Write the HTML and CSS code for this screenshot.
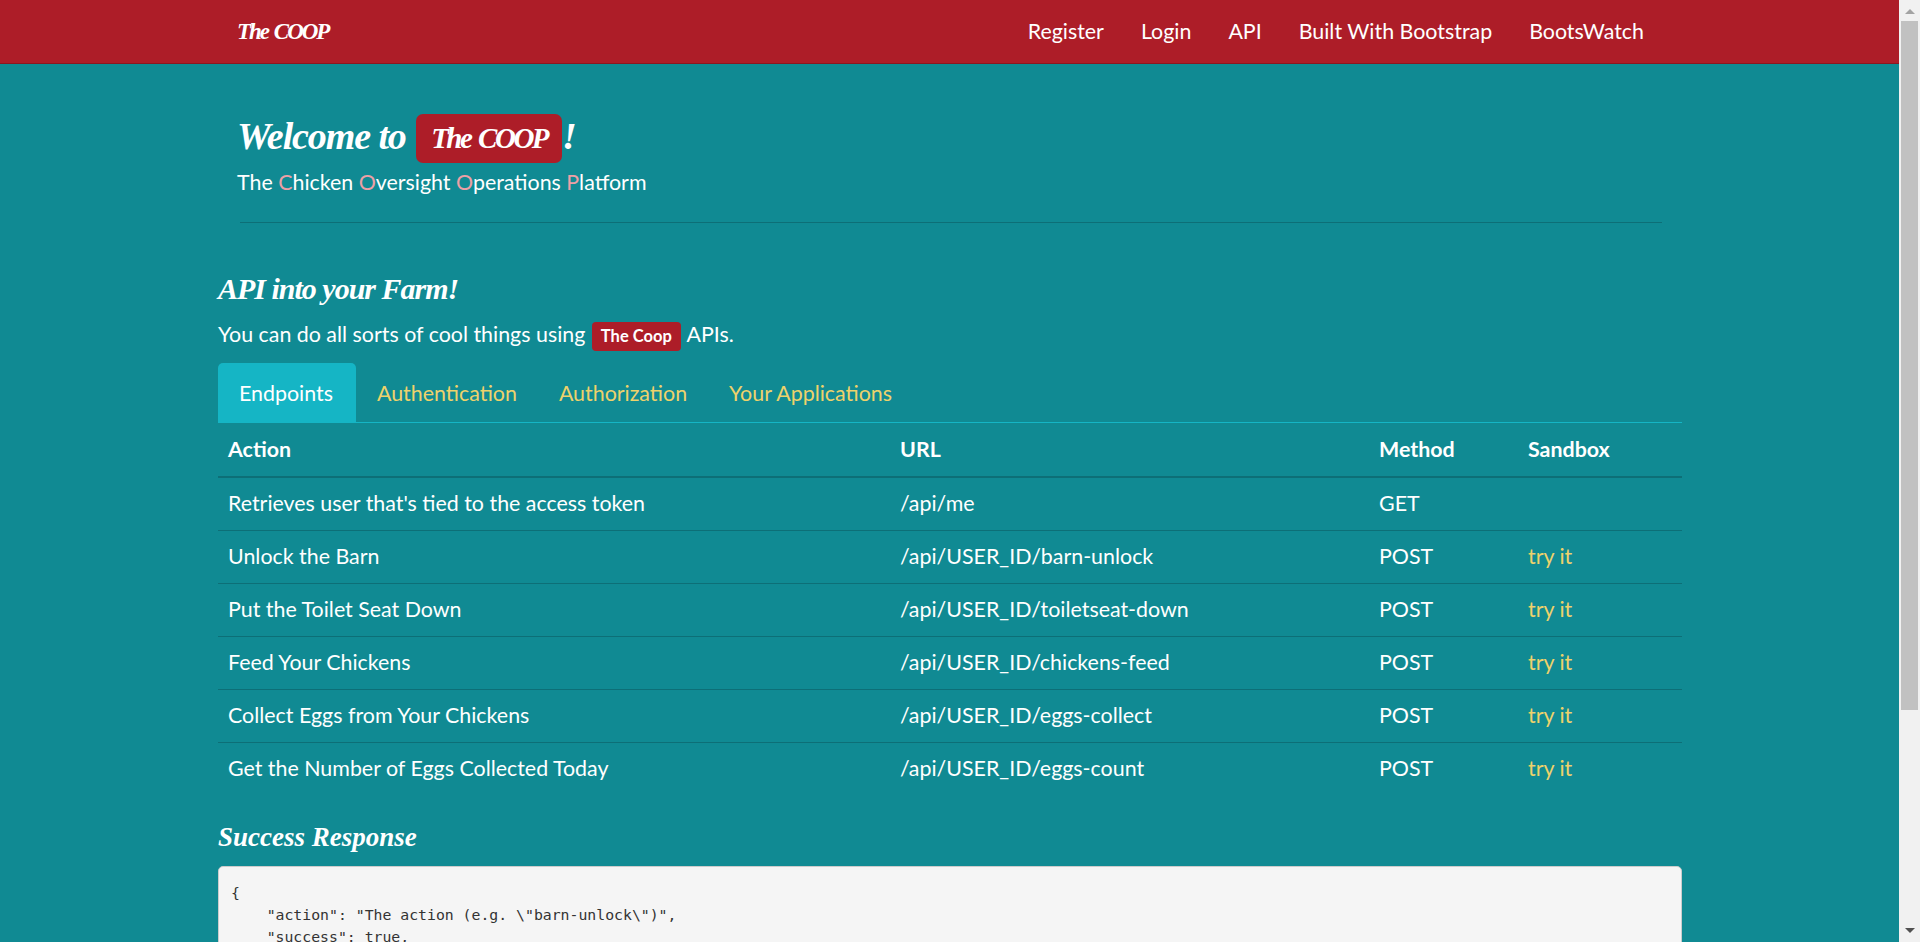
FILE: index.html
```html
<!DOCTYPE html>
<html lang="en">
<head>
    <meta charset="UTF-8">
    <meta name="viewport" content="width=device-width, initial-scale=1.0">
    <title>The COOP</title>
    <link rel="stylesheet" href="styles.css">
</head>
<body>
    <div class="window">
        <div class="page">
            <nav class="navbar">
                <div class="container nav-inner">
                    <a class="brand" href="#">The COOP</a>
                    <ul class="nav-links">
                        <li><a href="#">Register</a></li>
                        <li><a href="#">Login</a></li>
                        <li><a href="#">API</a></li>
                        <li><a href="#">Built With Bootstrap</a></li>
                        <li><a href="#">BootsWatch</a></li>
                    </ul>
                </div>
            </nav>

            <div class="container">
                <header class="jumbo">
                    <h1>Welcome to <span class="logo-big">The COOP</span>!</h1>
                    <p class="tagline">The <b>C</b>hicken <b>O</b>versight <b>O</b>perations <b>P</b>latform</p>
                    <hr>
                </header>

                <h2>API into your Farm!</h2>
                <p class="intro">You can do all sorts of cool things using <span class="logo-small">The Coop</span> APIs.</p>

                <ul class="tabs">
                    <li class="active"><a href="#">Endpoints</a></li>
                    <li><a href="#">Authentication</a></li>
                    <li><a href="#">Authorization</a></li>
                    <li><a href="#">Your Applications</a></li>
                </ul>

                <table class="endpoints">
                    <thead>
                        <tr><th class="col-action">Action</th><th class="col-url">URL</th><th class="col-method">Method</th><th>Sandbox</th></tr>
                    </thead>
                    <tbody>
                        <tr><td>Retrieves user that's tied to the access token</td><td>/api/me</td><td>GET</td><td></td></tr>
                        <tr><td>Unlock the Barn</td><td>/api/USER_ID/barn-unlock</td><td>POST</td><td><a href="#">try it</a></td></tr>
                        <tr><td>Put the Toilet Seat Down</td><td>/api/USER_ID/toiletseat-down</td><td>POST</td><td><a href="#">try it</a></td></tr>
                        <tr><td>Feed Your Chickens</td><td>/api/USER_ID/chickens-feed</td><td>POST</td><td><a href="#">try it</a></td></tr>
                        <tr><td>Collect Eggs from Your Chickens</td><td>/api/USER_ID/eggs-collect</td><td>POST</td><td><a href="#">try it</a></td></tr>
                        <tr><td>Get the Number of Eggs Collected Today</td><td>/api/USER_ID/eggs-count</td><td>POST</td><td><a href="#">try it</a></td></tr>
                    </tbody>
                </table>

                <h3>Success Response</h3>
                <pre>{
    "action": "The action (e.g. \"barn-unlock\")",
    "success": true,
    "message": "Barn unlocked"
}</pre>
            </div>
        </div>

        <div class="scrollbar">
            <span class="arrow-up"></span>
            <div class="thumb"></div>
            <span class="arrow-down"></span>
        </div>
    </div>
</body>
</html>
```

FILE: styles.css
```css
html, body {
    margin: 0;
    height: 100%;
    overflow: hidden;
}
body {
    font-family: Lato, Arial, sans-serif;
    font-size: 21.4px;
    color: white;
    background: #108a93;
}
a {
    text-decoration: none;
    color: #eed26b;
}
.window {
    display: flex;
    height: 942px;
}
.page {
    flex: 1;
    min-width: 0;
    overflow: hidden;
}
.container {
    width: 1464px;
    margin-left: 218px;
}

/* navbar */
.navbar {
    height: 63px;
    background: #ad1d28;
    border-bottom: 1px solid #8a1720;
}
.nav-inner {
    display: flex;
    justify-content: space-between;
    align-items: center;
    height: 63px;
}
.brand {
    padding-left: 19px;
    font-family: "Liberation Serif", serif;
    font-weight: bold;
    font-style: italic;
    font-size: 23px;
    letter-spacing: -2px;
    word-spacing: 2px;
    color: white;
}
.nav-links {
    display: flex;
    gap: 37px;
    list-style: none;
    margin: 0 0 2px;
    padding: 0 38px 0 0;
}
.nav-links a {
    color: white;
}

/* header */
.jumbo {
    padding: 50px 20px 0 19px;
}
h1 {
    margin: 0;
    height: 50px;
    font-family: "Liberation Serif", serif;
    font-style: italic;
    font-weight: bold;
    font-size: 38px;
    line-height: 44px;
    letter-spacing: -1.1px;
}
.logo-big {
    display: inline-block;
    height: 49px;
    padding: 0 15px;
    margin-left: 2px;
    background: #ad1d28;
    border-radius: 7px;
    font-size: 29px;
    line-height: 49px;
    letter-spacing: -2.5px;
    word-spacing: 3px;
    vertical-align: top;
}
.tagline {
    margin: 3px 0 0;
    line-height: 30px;
}
.tagline b {
    font-weight: normal;
    color: #eda0a6;
}
hr {
    margin: 25px 0 0 3px;
    border: none;
    border-top: 1px solid #0d6f77;
}
h2 {
    margin: 49px 0 0;
    font-family: "Liberation Serif", serif;
    font-style: italic;
    font-weight: bold;
    font-size: 30px;
    line-height: 34px;
    letter-spacing: -1px;
}
.intro {
    margin: 13px 0 0;
    line-height: 30px;
}
.logo-small {
    display: inline-block;
    padding: 0 9px;
    margin: 0 1px;
    background: #ad1d28;
    border-radius: 4px;
    font-size: 16.5px;
    font-weight: bold;
    line-height: 29px;
}

/* tabs */
.tabs {
    display: flex;
    list-style: none;
    margin: 12px 0 0;
    padding: 0;
    height: 59px;
    border-bottom: 1px solid #15b5c5;
}
.tabs a {
    display: block;
    padding: 0 21px;
    line-height: 60px;
}
.tabs .active {
    background: #15b5c5;
    border-radius: 5px 5px 0 0;
}
.tabs .active a {
    padding-right: 23px;
    color: white;
}

/* table */
.endpoints {
    width: 100%;
    border-collapse: collapse;
    table-layout: fixed;
}
.col-action { width: 672px; }
.col-url { width: 479px; }
.col-method { width: 149px; }
.endpoints th, .endpoints td {
    box-sizing: border-box;
    padding: 0 10px 2px;
    text-align: left;
}
.endpoints th {
    height: 54px;
    border-bottom: 2px solid #0d6f77;
}
.endpoints td {
    height: 53px;
    border-top: 1px solid #0d6f77;
}
.endpoints tbody tr:first-child td {
    border-top: none;
}

/* response */
h3 {
    margin: 22px 0 0;
    font-family: "Liberation Serif", serif;
    font-style: italic;
    font-weight: bold;
    font-size: 27px;
    line-height: 40px;
}
pre {
    margin: 9px 0 0;
    padding: 15px 12px;
    background: #f5f5f5;
    border: 1px solid #ccc;
    border-radius: 5px;
    color: #333;
    font-family: "DejaVu Sans Mono", monospace;
    font-size: 14.8px;
    line-height: 22px;
}

/* scrollbar */
.scrollbar {
    position: relative;
    flex: none;
    width: 21px;
    background: #f1f1f1;
    padding-top: 21px;
    box-sizing: border-box;
}
.thumb {
    width: 17px;
    height: 689px;
    margin-left: 2px;
    background: #c1c1c1;
}
.arrow-up, .arrow-down {
    position: absolute;
    left: 6px;
    width: 0;
    height: 0;
    border-left: 5px solid transparent;
    border-right: 5px solid transparent;
}
.arrow-up {
    top: 9px;
    border-bottom: 5px solid #a3a3a3;
}
.arrow-down {
    bottom: 9px;
    border-top: 5px solid #505050;
}
```
